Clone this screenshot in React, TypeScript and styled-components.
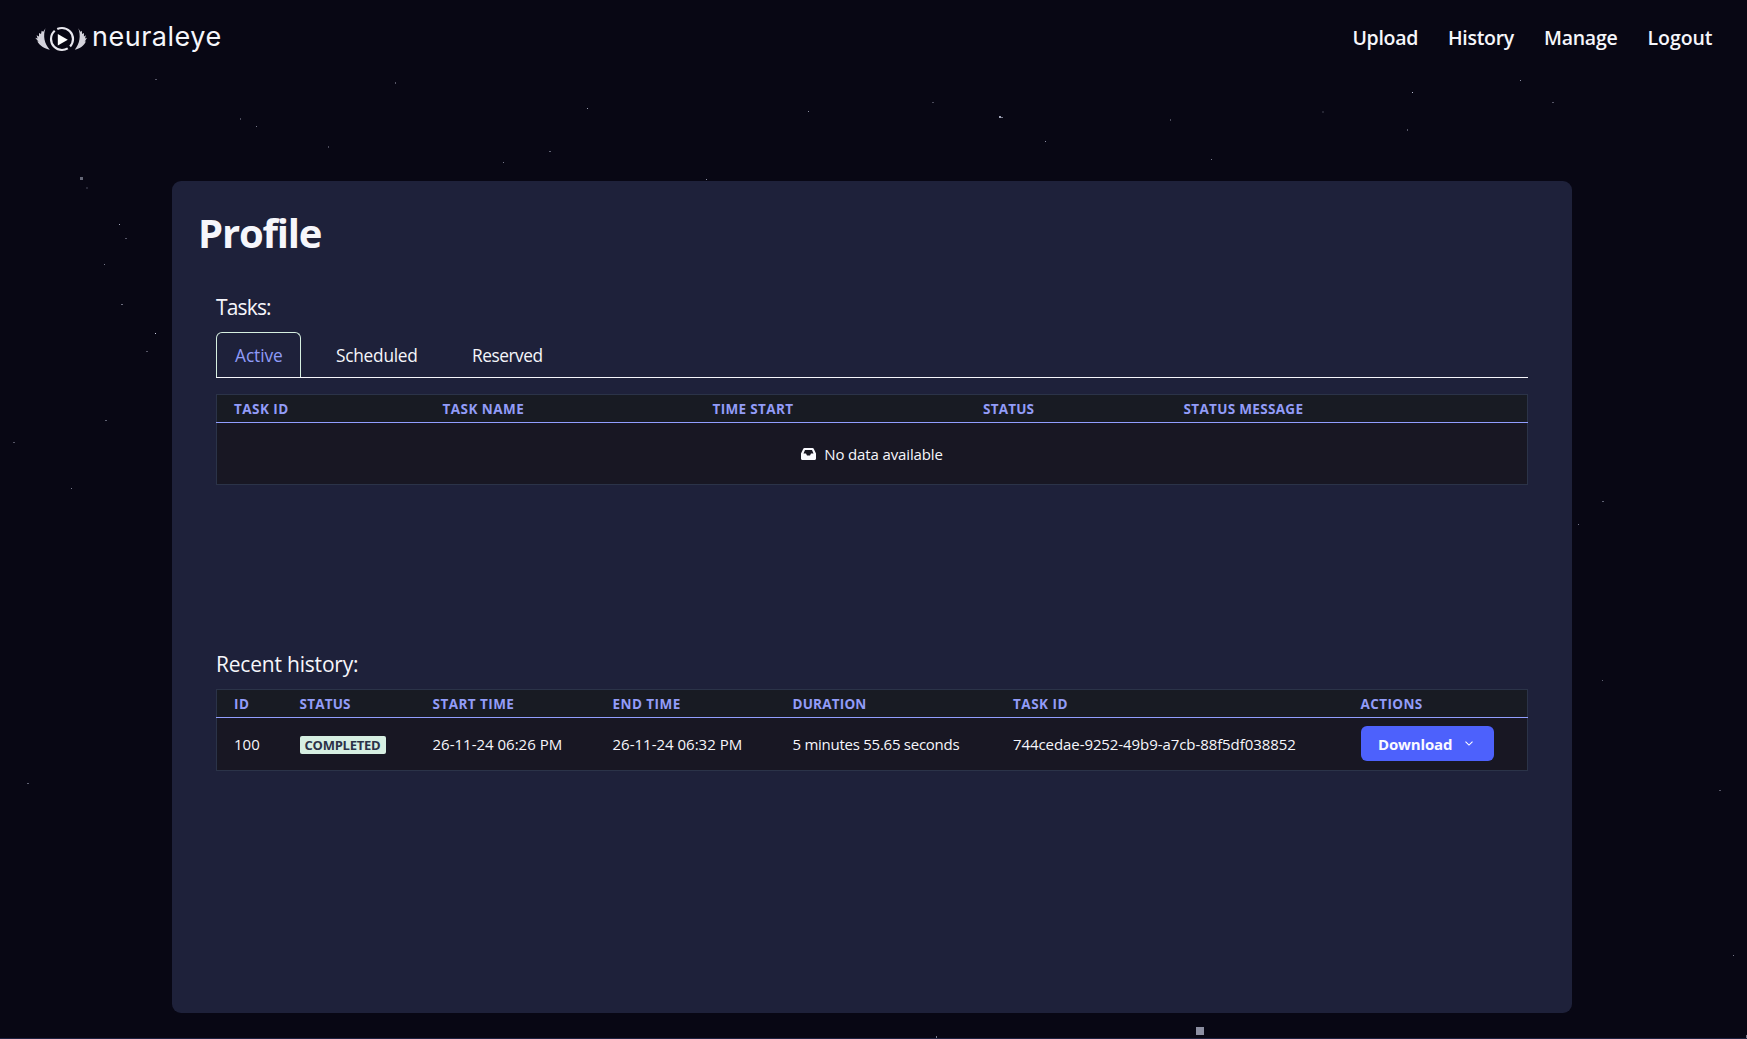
import React from "react";
import styled, { createGlobalStyle } from "styled-components";

const Global = createGlobalStyle`
  *, *::before, *::after { box-sizing: border-box; }
  html, body { margin: 0; padding: 0; background: #080714; }
  body { font-family: "Open Sans", "Noto Sans", sans-serif; color: #f6f6fb; overflow: hidden; }
`;

const Page = styled.div`
  position: relative;
  height: 1039px;
  overflow: hidden;
  background: #080714;
  border-bottom: 1px solid #1f2240;
  display: flex;
  flex-direction: column;
`;

const Sky = styled.svg`
  position: absolute;
  inset: 0;
  pointer-events: none;
`;

const Header = styled.header`
  height: 76px;
  padding: 0 34.5px 0 35px;
  display: flex;
  justify-content: space-between;
  align-items: center;
`;

const Brand = styled.a`
  display: flex;
  align-items: center;
`;

const Mark = styled.svg`
  margin-top: 2px;
`;

const BrandName = styled.span`
  font: 400 27px/30px Inter, sans-serif;
  letter-spacing: 0.5px;
  margin-left: 5px;
  margin-top: -2px;
`;

const Nav = styled.nav`
  display: flex;
  gap: 30px;
`;

const NavLink = styled.a<{ $track: number }>`
  font-size: 19.5px;
  line-height: 28px;
  font-weight: 600;
  letter-spacing: ${(p) => p.$track}px;
`;

const Card = styled.main`
  position: relative;
  width: 1400px;
  height: 832px;
  margin: 105px 0 0 172px;
  padding: 25px 44px 0;
  border-radius: 9px;
  background: #1e213a;
`;

const Title = styled.h1`
  margin: 0 0 0 -18px;
  font-size: 40px;
  line-height: 54px;
  font-weight: 700;
  letter-spacing: -1.2px;
`;

const SectionTitle = styled.h2<{ $top: number; $track: number }>`
  margin: ${(p) => p.$top}px 0 0;
  font-size: 21px;
  line-height: 30px;
  font-weight: 400;
  letter-spacing: ${(p) => p.$track}px;
`;

const Tabs = styled.div`
  display: flex;
  gap: 16px;
  height: 46px;
  margin-top: 10px;
  border-bottom: 1px solid #f6f6fb;
`;

const Tab = styled.button<{ $active?: boolean; $width: number; $track: number }>`
  width: ${(p) => p.$width}px;
  padding: 0 0 0 18px;
  text-align: left;
  background: none;
  border: 1px solid ${(p) => (p.$active ? "#d6efe0" : "transparent")};
  border-bottom: 0;
  border-radius: 6px 6px 0 0;
  color: ${(p) => (p.$active ? "#8f9bf8" : "#f6f6fb")};
  font: 400 17.3px/45px "Open Sans", "Noto Sans", sans-serif;
  letter-spacing: ${(p) => p.$track}px;
`;

const Table = styled.section<{ $top: number; $cols: string }>`
  margin-top: ${(p) => p.$top}px;
  border: 1px solid #2b3348;
  background: #181723;
  --cols: ${(p) => p.$cols};
`;

const HeadRow = styled.div`
  display: grid;
  grid-template-columns: var(--cols);
  height: 28px;
  margin: 0 -1px;
  padding: 0 1px;
  background: #181b23;
  background-clip: content-box;
  border-bottom: 1px solid #919eff;
`;

const HeadCell = styled.div<{ $track?: number }>`
  padding-left: 17px;
  font-size: 13.5px;
  line-height: 28px;
  font-weight: 700;
  color: #929cf8;
  white-space: nowrap;
  letter-spacing: ${(p) => p.$track ?? 0.45}px;
`;

const Row = styled.div`
  display: grid;
  grid-template-columns: var(--cols);
  align-items: center;
  height: 52px;
`;

const Cell = styled.div<{ $track?: number }>`
  padding-left: 17px;
  font-size: 15px;
  line-height: 20px;
  white-space: nowrap;
  letter-spacing: ${(p) => p.$track ?? 0}px;
`;

const Empty = styled.div`
  display: flex;
  align-items: center;
  justify-content: center;
  gap: 8px;
  height: 61px;
  font-size: 15px;
  letter-spacing: -0.13px;
`;

const Badge = styled.span`
  display: block;
  width: 86px;
  height: 18px;
  margin-top: 2px;
  border-radius: 2px;
  background: #d6efe2;
  color: #2b3147;
  text-align: center;
  font-size: 13px;
  line-height: 18px;
  font-weight: 700;
  letter-spacing: -0.25px;
`;

const DownloadButton = styled.button`
  display: flex;
  align-items: center;
  gap: 13px;
  width: 133px;
  height: 35px;
  margin-bottom: 1px;
  padding: 0 0 0 17.5px;
  border: 0;
  border-radius: 6px;
  background: #4d61fc;
  color: #fafaff;
  font: 700 15px/20px "Open Sans", "Noto Sans", sans-serif;
  letter-spacing: -0.15px;
`;

const stars: [number, number, number, number, number][] = [
  [155, 79, 2, 1, 0.35], [395, 82, 1, 2, 0.35], [240, 118, 1, 2, 0.3], [256, 126, 1, 1, 0.5],
  [328, 146, 1, 2, 0.3], [587, 108, 1, 1, 0.65], [808, 111, 1, 1, 0.6], [549, 151, 2, 1, 0.4],
  [503, 162, 1, 1, 0.5], [706, 179, 1, 1, 0.6], [80, 177, 3, 3, 0.42], [86, 187, 2, 2, 0.15],
  [932, 102, 2, 1, 0.3], [999, 116, 2, 2, 0.7], [1001, 117, 2, 1, 0.5], [1045, 141, 1, 1, 0.6],
  [1170, 119, 1, 2, 0.3], [1211, 159, 1, 1, 0.5], [1322, 111, 2, 2, 0.13], [1407, 129, 1, 2, 0.35],
  [1412, 92, 1, 1, 0.8], [1520, 80, 1, 1, 0.6], [1552, 102, 2, 1, 0.35], [119, 224, 1, 1, 0.7],
  [125, 238, 2, 1, 0.35], [104, 264, 1, 1, 0.5], [121, 304, 2, 1, 0.45], [155, 333, 1, 1, 0.9],
  [146, 351, 2, 1, 0.35], [105, 420, 2, 1, 0.4], [13, 442, 2, 1, 0.35], [71, 488, 1, 1, 0.5],
  [27, 783, 2, 1, 0.4], [1602, 501, 2, 1, 0.4], [1578, 524, 1, 1, 0.5], [1602, 680, 1, 1, 0.4],
  [1719, 790, 2, 1, 0.35], [1733, 955, 1, 1, 0.5], [936, 1036, 1, 2, 0.5], [1196, 1027, 8, 8, 0.6],
  [1746, 1035, 1, 3, 0.5],
];

const LogoMark = () => (
  <Mark width="52" height="26" viewBox="0 0 52 26" fill="none">
    <circle cx="27" cy="13" r="11" stroke="#e9e8ef" strokeWidth="2.2" strokeDasharray="32.5 3 30.6 3" strokeDashoffset="-11.1" />
    <path d="M22.800 8 32.800 13.700 22.800 19.500Z" fill="#fff" />
    <path d="M10.500 2.200C7.800 9.500 9.200 17.500 14.800 23.700 9.500 22.800 4.500 19.500 2.200 15.300L3.600 15.700 .2 11.800 2.600 12.600 1.600 9.300 4 10.500 4 6.900 6 8.100 6.700 4.700 8.200 5.700Z" fill="#d4d3dc" />
    <path d="M43.300 2.200C46 9.500 44.800 17.500 39.800 23.700 45 22.800 49.200 19.500 51 15.300L49.700 15.700 52 11.800 50 12.600 50.900 9.300 48.900 10.500 49 6.900 47.200 8.100 46.700 4.700 45.400 5.700Z" fill="#d4d3dc" />
  </Mark>
);

const TrayIcon = () => (
  <svg width="15" height="12" viewBox="0 0 15 12">
    <path fillRule="evenodd" d="M3.500 0h8c.5 0 .9.200 1.100.6L15 5.500V10.500c0 .8-.6 1.500-1.500 1.500h-12C.6 12 0 11.300 0 10.500V5.500L2.400.6C2.600.2 3 0 3.500 0ZM4 2 2.500 5.500H5l1 2h3l1-2h2.500L11 2Z" fill="#fafaff" />
  </svg>
);

export default function App() {
  return (
    <Page>
      <Global />
      <Sky width="1747" height="1039">
        {stars.map(([x, y, w, h, o], i) => (
          <rect key={i} x={x} y={y} width={w} height={h} fill="#e4e9ff" opacity={o} />
        ))}
      </Sky>
      <Header>
        <Brand><LogoMark /><BrandName>neuraleye</BrandName></Brand>
        <Nav>
          <NavLink $track={-0.3}>Upload</NavLink>
          <NavLink $track={-0.3}>History</NavLink>
          <NavLink $track={-0.25}>Manage</NavLink>
          <NavLink $track={-0.05}>Logout</NavLink>
        </Nav>
      </Header>
      <Card>
        <Title>Profile</Title>
        <SectionTitle $top={32} $track={-0.85}>Tasks:</SectionTitle>
        <Tabs>
          <Tab $active $width={85} $track={-0.05}>Active</Tab>
          <Tab $width={120} $track={-0.25}>Scheduled</Tab>
          <Tab $width={110} $track={-0.45}>Reserved</Tab>
        </Tabs>
        <Table $top={16} $cols="208.5px 270px 270.5px 200.5px 1fr">
          <HeadRow>
            <HeadCell>TASK ID</HeadCell>
            <HeadCell>TASK NAME</HeadCell>
            <HeadCell $track={0.35}>TIME START</HeadCell>
            <HeadCell $track={0.2}>STATUS</HeadCell>
            <HeadCell $track={0.32}>STATUS MESSAGE</HeadCell>
          </HeadRow>
          <Empty><TrayIcon /><span>No data available</span></Empty>
        </Table>
        <SectionTitle $top={164} $track={-0.2}>Recent history:</SectionTitle>
        <Table $top={10} $cols="65.5px 133px 180px 180px 220.5px 347.5px 1fr">
          <HeadRow>
            <HeadCell>ID</HeadCell>
            <HeadCell $track={0.2}>STATUS</HeadCell>
            <HeadCell $track={0.45}>START TIME</HeadCell>
            <HeadCell $track={0.45}>END TIME</HeadCell>
            <HeadCell $track={0.2}>DURATION</HeadCell>
            <HeadCell $track={0.5}>TASK ID</HeadCell>
            <HeadCell $track={0.4}>ACTIONS</HeadCell>
          </HeadRow>
          <Row>
            <Cell>100</Cell>
            <Cell><Badge>COMPLETED</Badge></Cell>
            <Cell>26-11-24 06:26 PM</Cell>
            <Cell>26-11-24 06:32 PM</Cell>
            <Cell $track={-0.26}>5 minutes 55.65 seconds</Cell>
            <Cell $track={-0.08}>744cedae-9252-49b9-a7cb-88f5df038852</Cell>
            <Cell>
              <DownloadButton>
                <span>Download</span>
                <svg width="8" height="5" viewBox="0 0 8 5" fill="none" stroke="#fff" strokeWidth="1.1"><path d="M.5.7 4 4.100 7.500.7" /></svg>
              </DownloadButton>
            </Cell>
          </Row>
        </Table>
      </Card>
    </Page>
  );
}
